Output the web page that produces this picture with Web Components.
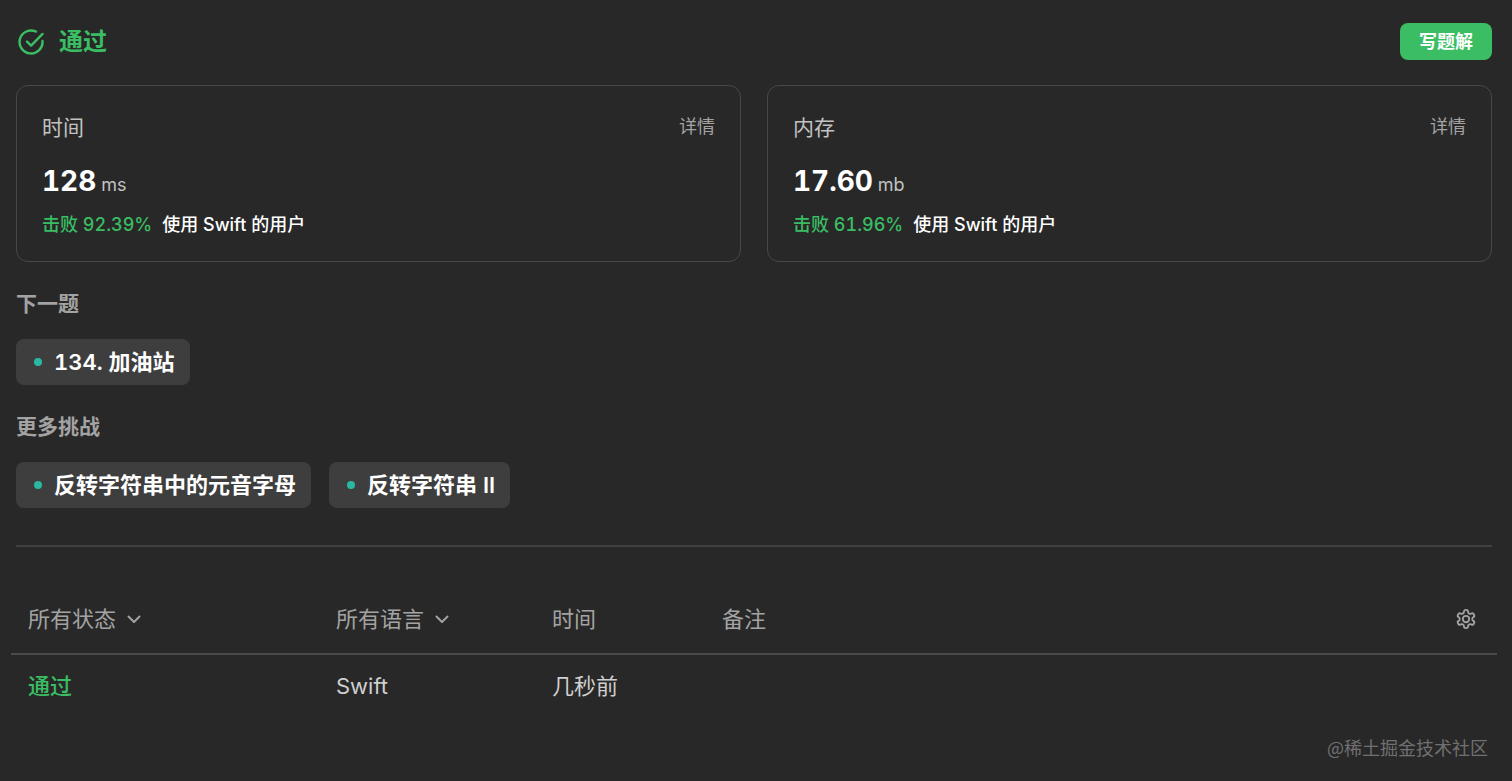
<!DOCTYPE html>
<html lang="zh-CN">
<head>
<meta charset="utf-8">
<meta name="viewport" content="width=device-width, initial-scale=1">
<title>提交记录</title>
<style>
  :root {
    --bg: #282828;
    --line: #404040;
    --chip: #3e3e3e;
    --green: #3abd63;
    --easy: #2bb8a3;
    --text: #fff;
    --text-2: #c2c2c2;
    --text-3: #a3a3a3;
  }
  body {
    margin: 0;
    background: var(--bg);
    color: var(--text);
    font-family: Inter, "Noto Sans CJK SC", sans-serif;
    font-variant-numeric: tabular-nums;
  }
</style>
</head>
<body>

<submission-page>
  <result-header slot="header" action="写题解">通过</result-header>

  <stat-card slot="stats" label="时间" value="128" unit="ms" beats="92.39%">使用 Swift 的用户</stat-card>
  <stat-card slot="stats" label="内存" value="17.60" unit="mb" beats="61.96%">使用 Swift 的用户</stat-card>

  <problem-group label="下一题">
    <problem-chip>134. 加油站</problem-chip>
  </problem-group>
  <problem-group label="更多挑战">
    <problem-chip>反转字符串中的元音字母</problem-chip>
    <problem-chip>反转字符串 II</problem-chip>
  </problem-group>

  <submission-table slot="history"></submission-table>
  <span slot="mark">@稀土掘金技术社区</span>
</submission-page>

<script>
// small helper, every element here renders the same way
class BaseElement extends HTMLElement {
  constructor() {
    super();
    this.attachShadow({ mode: "open" });
  }
  connectedCallback() {
    this.shadowRoot.innerHTML = this.render();
  }
  attr(name) {
    return this.getAttribute(name) || "";
  }
}

class SubmissionPage extends BaseElement {
  render() {
    return `
      <style>
        :host { display: block; padding: 23px 20px 20px 16px; }
        .stats {
          display: grid;
          grid-template-columns: 1fr 1fr;
          gap: 26px;
          margin: 25px 0 27px;
        }
        .groups { display: flex; flex-direction: column; gap: 27px; }
        hr { margin: 37px 0; border: 0; height: 2px; background: var(--line); }
        .history { margin: 0 -5px; }
        footer {
          margin-top: 17px;
          padding-right: 4px;
          text-align: right;
          font: 18px/26px "Noto Sans CJK SC", sans-serif;
          color: #707070;
        }
      </style>
      <slot name="header"></slot>
      <div class="stats"><slot name="stats"></slot></div>
      <div class="groups"><slot></slot></div>
      <hr>
      <div class="history"><slot name="history"></slot></div>
      <footer><slot name="mark"></slot></footer>
    `;
  }
}

class ResultHeader extends BaseElement {
  render() {
    return `
      <style>
        :host { display: flex; align-items: center; justify-content: space-between; }
        h1 {
          display: flex;
          align-items: center;
          gap: 14px;
          margin: 0 0 0 1px;
          font-size: 24px;
          line-height: 37px;
          font-weight: 600;
          color: var(--green);
        }
        svg { width: 28px; height: 28px; }
        button {
          padding: 0 19px;
          border: 0;
          border-radius: 8px;
          background: var(--green);
          color: #fff;
          font: inherit;
          font-size: 18px;
          line-height: 37px;
          font-weight: 600;
          cursor: pointer;
        }
      </style>
      <h1>
        <svg viewBox="0 0 28 28" fill="none" stroke="currentColor" stroke-width="2.4" stroke-linecap="round" stroke-linejoin="round" aria-hidden="true">
          <path d="M19 3.6A11.5 11.5 0 1 0 25.5 13"/>
          <path d="M10 13.6l4.1 4.1L25.6 5.9"/>
        </svg>
        <slot></slot>
      </h1>
      <button type="button">${this.attr("action")}</button>
    `;
  }
}

class StatCard extends BaseElement {
  render() {
    return `
      <style>
        :host {
          display: block;
          padding: 27px 25px 22px;
          border: 1px solid #484848;
          border-radius: 12px;
        }
        header { display: flex; justify-content: space-between; }
        h2 { margin: 0; font-size: 21px; line-height: 30px; font-weight: 400; color: var(--text-2); }
        a { font-size: 18px; line-height: 28px; color: var(--text-3); text-decoration: none; }
        p { margin: 0; }
        .value { margin-top: 22px; font-size: 18px; line-height: 32px; color: var(--text-2); }
        .value b { font-size: 28px; font-weight: 700; color: var(--text); }
        .beats { display: flex; gap: 10px; margin-top: 10px; font-size: 18px; line-height: 28px; font-weight: 500; }
        .beats span { color: var(--green); }
      </style>
      <header>
        <h2>${this.attr("label")}</h2>
        <a href="#">详情</a>
      </header>
      <p class="value"><b>${this.attr("value")}</b> ${this.attr("unit")}</p>
      <p class="beats"><span>击败 ${this.attr("beats")}</span><slot></slot></p>
    `;
  }
}

class ProblemGroup extends BaseElement {
  render() {
    return `
      <style>
        :host { display: block; }
        h3 { margin: 0 0 20px; font-size: 21px; line-height: 30px; font-weight: 600; color: var(--text-3); }
        div { display: flex; flex-wrap: wrap; gap: 18px; }
      </style>
      <h3>${this.attr("label")}</h3>
      <div><slot></slot></div>
    `;
  }
}

class ProblemChip extends BaseElement {
  render() {
    return `
      <style>
        :host { display: block; }
        a {
          display: flex;
          align-items: center;
          gap: 12px;
          padding: 0 15px 0 18px;
          border-radius: 8px;
          background: var(--chip);
          color: var(--text);
          font-size: 22px;
          line-height: 46px;
          font-weight: 600;
          text-decoration: none;
        }
        a::before { content: ""; width: 8px; height: 8px; border-radius: 50%; background: var(--easy); }
      </style>
      <a href="#"><slot></slot></a>
    `;
  }
}

class FilterSelect extends BaseElement {
  render() {
    return `
      <style>
        :host { display: inline-grid; align-items: center; }
        select, svg { grid-area: 1 / 1; }
        select {
          appearance: none;
          margin: 0;
          padding: 0 25px 0 0;
          border: 0;
          background: none;
          color: inherit;
          font: inherit;
          cursor: pointer;
        }
        option { background: var(--chip); }
        svg { justify-self: end; width: 16px; height: 16px; pointer-events: none; }
      </style>
      <select aria-label="${this.attr("label")}">
        <option>${this.attr("label")}</option>
      </select>
      <svg viewBox="0 0 16 16" fill="none" stroke="currentColor" stroke-width="2" stroke-linecap="round" stroke-linejoin="round" aria-hidden="true">
        <path d="M2.5 5.5L8 11l5.500-5.500"/>
      </svg>
    `;
  }
}

class SubmissionTable extends BaseElement {
  render() {
    return `
      <style>
        :host { display: block; }
        table { width: 100%; table-layout: fixed; border-collapse: separate; border-spacing: 0; font-size: 22px; line-height: 30px; }
        th, td { padding: 0 0 0 17px; text-align: left; font-weight: 400; white-space: nowrap; }
        th { height: 69px; border-bottom: 2px solid #4a4a4a; color: var(--text-3); }
        td { height: 62px; color: #cfcfcf; }
        td.ok { color: var(--green); font-weight: 500; }
        .status { width: 291px; }
        .lang { width: 199px; }
        .time { width: 153px; }
        .tools { padding-right: 20px; text-align: right; }
        button { display: inline-flex; align-items: center; height: 30px; padding: 0; border: 0; background: none; color: inherit; cursor: pointer; vertical-align: top; }
        button svg { width: 22px; height: 22px; }
      </style>
      <table>
        <thead>
          <tr>
            <th class="status"><filter-select label="所有状态"></filter-select></th>
            <th class="lang"><filter-select label="所有语言"></filter-select></th>
            <th class="time">时间</th>
            <th>备注</th>
            <th class="tools">
              <button type="button" aria-label="设置">
                <svg viewBox="0 0 24 24" fill="none" stroke="currentColor" stroke-width="2" stroke-linecap="round" stroke-linejoin="round">
                  <path d="M12.220 2h-.44a2 2 0 0 0-2 2v.18a2 2 0 0 1-1 1.730l-.43.25a2 2 0 0 1-2 0l-.15-.08a2 2 0 0 0-2.730.73l-.22.38a2 2 0 0 0 .73 2.730l.15.1a2 2 0 0 1 1 1.720v.51a2 2 0 0 1-1 1.740l-.15.09a2 2 0 0 0-.73 2.730l.22.38a2 2 0 0 0 2.730.73l.15-.08a2 2 0 0 1 2 0l.43.25a2 2 0 0 1 1 1.730V20a2 2 0 0 0 2 2h.44a2 2 0 0 0 2-2v-.18a2 2 0 0 1 1-1.730l.43-.25a2 2 0 0 1 2 0l.15.08a2 2 0 0 0 2.730-.73l.22-.39a2 2 0 0 0-.73-2.730l-.15-.08a2 2 0 0 1-1-1.740v-.5a2 2 0 0 1 1-1.740l.15-.09a2 2 0 0 0 .73-2.730l-.22-.38a2 2 0 0 0-2.730-.73l-.15.08a2 2 0 0 1-2 0l-.43-.25a2 2 0 0 1-1-1.730V4a2 2 0 0 0-2-2z"/>
                  <circle cx="12" cy="12" r="3.500"/>
                </svg>
              </button>
            </th>
          </tr>
        </thead>
        <tbody>
          <tr>
            <td class="ok">通过</td>
            <td>Swift</td>
            <td>几秒前</td>
            <td></td>
            <td></td>
          </tr>
        </tbody>
      </table>
    `;
  }
}

window.customElements.define("filter-select", FilterSelect);
window.customElements.define("submission-table", SubmissionTable);
window.customElements.define("problem-chip", ProblemChip);
window.customElements.define("problem-group", ProblemGroup);
window.customElements.define("stat-card", StatCard);
window.customElements.define("result-header", ResultHeader);
window.customElements.define("submission-page", SubmissionPage);
</script>
</body>
</html>
